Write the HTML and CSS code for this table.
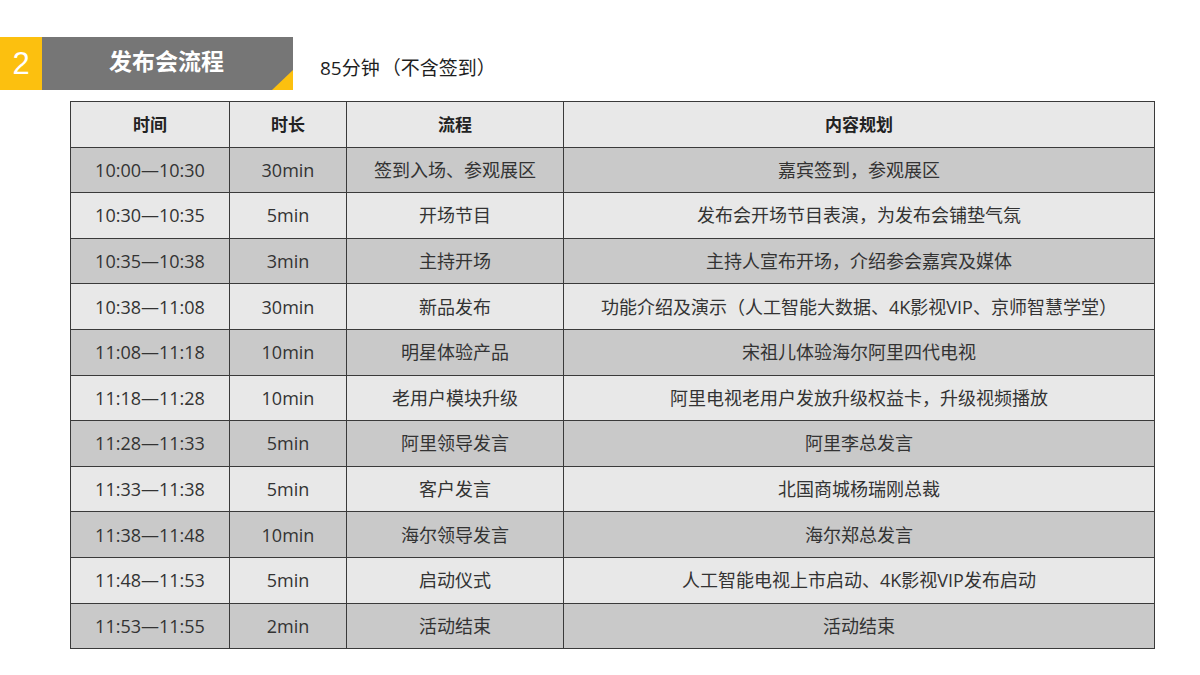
FILE: index.html
```html
<!DOCTYPE html>
<html lang="zh-CN">
<head>
<meta charset="utf-8">
<link rel="stylesheet" href="styles.css">
</head>
<body>
<div class="page">
  <div class="title-row">
    <div class="num">2</div>
    <div class="title-bar"><span class="title-text">发布会流程</span><span class="corner"></span></div>
    <div class="subtitle">85分钟<span class="po">（</span>不含签到<span class="pc">）</span></div>
  </div>
  <table class="schedule">
    <colgroup>
      <col class="c1"><col class="c2"><col class="c3"><col class="c4">
    </colgroup>
    <thead>
      <tr><th>时间</th><th>时长</th><th>流程</th><th>内容规划</th></tr>
    </thead>
    <tbody>
      <tr><td>10:00—10:30</td><td>30min</td><td>签到入场、参观展区</td><td>嘉宾签到，参观展区</td></tr>
      <tr><td>10:30—10:35</td><td>5min</td><td>开场节目</td><td>发布会开场节目表演，为发布会铺垫气氛</td></tr>
      <tr><td>10:35—10:38</td><td>3min</td><td>主持开场</td><td>主持人宣布开场，介绍参会嘉宾及媒体</td></tr>
      <tr><td>10:38—11:08</td><td>30min</td><td>新品发布</td><td>功能介绍及演示（人工智能大数据、4K影视VIP、京师智慧学堂）</td></tr>
      <tr><td>11:08—11:18</td><td>10min</td><td>明星体验产品</td><td>宋祖儿体验海尔阿里四代电视</td></tr>
      <tr><td>11:18—11:28</td><td>10min</td><td>老用户模块升级</td><td>阿里电视老用户发放升级权益卡，升级视频播放</td></tr>
      <tr><td>11:28—11:33</td><td>5min</td><td>阿里领导发言</td><td>阿里李总发言</td></tr>
      <tr><td>11:33—11:38</td><td>5min</td><td>客户发言</td><td>北国商城杨瑞刚总裁</td></tr>
      <tr><td>11:38—11:48</td><td>10min</td><td>海尔领导发言</td><td>海尔郑总发言</td></tr>
      <tr><td>11:48—11:53</td><td>5min</td><td>启动仪式</td><td>人工智能电视上市启动、4K影视VIP发布启动</td></tr>
      <tr><td>11:53—11:55</td><td>2min</td><td>活动结束</td><td>活动结束</td></tr>
    </tbody>
  </table>
</div>
</body>
</html>
```
FILE: styles.css
```css
html, body {
  margin: 0;
  padding: 0;
  background: #ffffff;
}
body {
  width: 1200px;
  height: 675px;
  overflow: hidden;
  font-family: "Open Sans", "Noto Sans CJK SC", sans-serif;
  color: #333333;
}
.page {
  padding-top: 37px;
}
.title-row {
  display: flex;
  align-items: center;
  height: 53px;
}
.num {
  width: 42px;
  height: 53px;
  background: #fcc00f;
  color: #ffffff;
  font-family: "Liberation Sans", Arial, sans-serif;
  font-size: 31px;
  display: flex;
  align-items: center;
  justify-content: center;
}
.title-bar {
  position: relative;
  width: 251px;
  height: 53px;
  background: #767676;
  display: flex;
  align-items: center;
  justify-content: center;
  box-sizing: border-box;
}
.title-text {
  font-family: "Noto Sans CJK SC", sans-serif;
  color: #ffffff;
  font-size: 23px;
  font-weight: bold;
  margin-right: 2px;
  margin-top: -8px;
}
.corner {
  position: absolute;
  right: 0;
  bottom: 0;
  width: 0;
  height: 0;
  border-style: solid;
  border-width: 0 0 20px 21px;
  border-color: transparent transparent #fcc00f transparent;
}
.subtitle {
  margin-left: 27px;
  font-size: 19px;
  color: #1e1e1e;
  margin-top: 6px;
}
.po {
  margin-left: 2px;
}
.pc {
  margin-right: 8px;
}
.schedule {
  margin-top: 11px;
  margin-left: 70px;
  width: 1085px;
  border-collapse: collapse;
  table-layout: fixed;
  border: 1.5px solid #333333;
}
.c1 { width: 159px; }
.c2 { width: 117px; }
.c3 { width: 217px; }
.c4 { width: auto; }
.schedule th, .schedule td {
  border: 1.5px solid #3a3a3a;
  text-align: center;
  height: 44.6px;
  padding: 0;
  font-size: 18px;
  line-height: 20px;
  white-space: nowrap;
}
.schedule th {
  font-family: "Noto Sans CJK SC", sans-serif;
  background: #e8e8e8;
  font-weight: bold;
  font-size: 17px;
  color: #222222;
}
.schedule tbody tr:nth-child(odd) td {
  background: #c9c9c9;
}
.schedule tbody tr:nth-child(even) td {
  background: #e8e8e8;
}
```
